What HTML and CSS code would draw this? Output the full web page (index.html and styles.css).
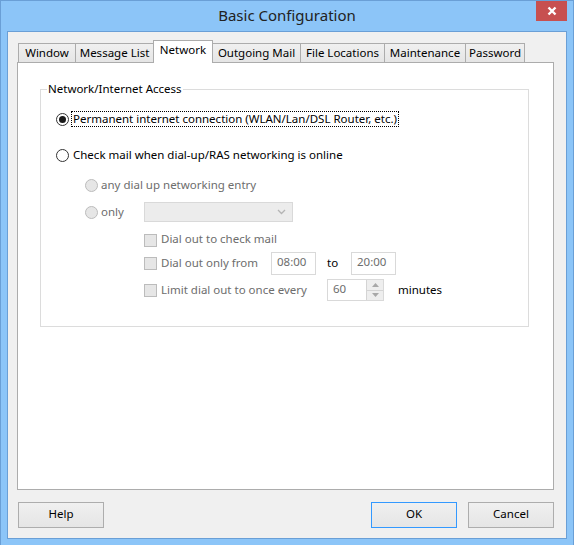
FILE: index.html
```html
<!DOCTYPE html>
<html>
<head>
<meta charset="utf-8">
<title>Basic Configuration</title>
<link rel="stylesheet" href="styles.css">
</head>
<body>
<div class="window">
  <div class="titlebar">
    <span class="title">Basic Configuration</span>
    <div class="close">
      <svg width="10" height="10" viewBox="0 0 10 10"><path d="M1.5 1.5 L8.5 8.5 M8.5 1.5 L1.5 8.5" stroke="#fff" stroke-width="2.4" fill="none"/></svg>
    </div>
  </div>
  <div class="client">
    <div class="tabs">
      <div class="tab t-window">Window</div>
      <div class="tab t-msg">Message List</div>
      <div class="tab t-net selected">Network</div>
      <div class="tab t-out">Outgoing Mail</div>
      <div class="tab t-file">File Locations</div>
      <div class="tab t-maint">Maintenance</div>
      <div class="tab t-pass">Password</div>
    </div>
    <div class="panel">
      <div class="group">
        <span class="legend">Network/Internet Access</span>
        <div class="row r1">
          <span class="radio checked"></span>
          <span class="label focus">Permanent internet connection (WLAN/Lan/DSL Router, etc.)</span>
        </div>
        <div class="row r2">
          <span class="radio"></span>
          <span class="label">Check mail when dial-up/RAS networking is online</span>
        </div>
        <div class="row sub any">
          <span class="radio disabled"></span>
          <span class="dlabel">any dial up networking entry</span>
        </div>
        <div class="row sub only">
          <span class="radio disabled"></span>
          <span class="dlabel only-text">only</span>
          <div class="combo">
            <svg class="chev" width="9" height="6" viewBox="0 0 9 6"><path d="M1 1 L4.5 4.5 L8 1" stroke="#b4b4b4" stroke-width="1.3" fill="none"/></svg>
          </div>
        </div>
        <div class="row cb cb1">
          <span class="check"></span>
          <span class="dlabel">Dial out to check mail</span>
        </div>
        <div class="row cb cb2">
          <span class="check"></span>
          <span class="dlabel w-from">Dial out only from</span>
          <span class="edit">08:00</span>
          <span class="static to">to</span>
          <span class="edit">20:00</span>
        </div>
        <div class="row cb cb3">
          <span class="check"></span>
          <span class="dlabel w-every">Limit dial out to once every</span>
          <div class="spin">
            <span class="spin-text">60</span>
            <div class="spin-btns">
              <span class="spin-btn"><svg width="7" height="4" viewBox="0 0 7 4"><path d="M0 4 L3.5 0 L7 4 Z" fill="#a8a8a8"/></svg></span>
              <span class="spin-btn"><svg width="7" height="4" viewBox="0 0 7 4"><path d="M0 0 L3.5 4 L7 0 Z" fill="#a8a8a8"/></svg></span>
            </div>
          </div>
          <span class="static minutes">minutes</span>
        </div>
      </div>
    </div>
    <div class="buttons">
      <button class="btn">Help</button>
      <span class="spacer"></span>
      <button class="btn default">OK</button>
      <button class="btn">Cancel</button>
    </div>
  </div>
</div>
</body>
</html>
```
FILE: styles.css
```css
html, body {
  margin: 0;
  padding: 0;
  background: #8cc5f8;
}
body {
  font-family: "Noto Sans", "Open Sans", sans-serif;
  font-size: 11.5px;
  color: #000;
}
.window {
  width: 574px;
  height: 545px;
  box-sizing: border-box;
  border: 1px solid #6a9fd6;
  border-bottom: none;
  background: #8cc5f8;
  display: flex;
  flex-direction: column;
}
.titlebar {
  height: 30px;
  position: relative;
  display: flex;
  align-items: center;
  justify-content: center;
  flex: none;
}
.title {
  font-size: 15px;
  color: #222;
  margin-top: -2px;
}
.close {
  position: absolute;
  top: 0;
  right: 6px;
  width: 31px;
  height: 20px;
  background: #c75050;
  display: flex;
  align-items: center;
  justify-content: center;
}
.close svg { display: block; }
.client {
  margin: 0 6px 6px 6px;
  border: 1px solid #6a9fd6;
  background: #f0f0f0;
  height: 508px;
  box-sizing: border-box;
  padding: 8px 12px 0 9px;
  display: flex;
  flex-direction: column;
}
.tabs {
  height: 22px;
  display: flex;
  align-items: flex-end;
  padding-left: 1px;
  position: relative;
  z-index: 2;
}
.tab {
  height: 19px;
  box-sizing: border-box;
  border: 1px solid #acacac;
  border-bottom: none;
  background: linear-gradient(#f0f0f0, #e5e5e5);
  text-align: center;
  line-height: 18px;
  margin-left: -1px;
  white-space: nowrap;
}
.tab:first-child { margin-left: 0; }
.t-window { width: 58px; }
.t-msg { width: 79px; }
.t-net { width: 60px; }
.t-out { width: 89px; }
.t-file { width: 85px; }
.t-maint { width: 82px; }
.t-pass { width: 60px; }
.tab.selected {
  height: 23px;
  background: #fff;
  margin-bottom: -1px;
  line-height: 18px;
  position: relative;
  z-index: 3;
}
.panel {
  height: 428px;
  box-sizing: border-box;
  border: 1px solid #acacac;
  background: #fff;
  flex: none;
  padding-top: 26px;
  padding-left: 22px;
}
.group {
  position: relative;
  width: 489px;
  height: 238px;
  box-sizing: border-box;
  border: 1px solid #dcdcdc;
  padding-top: 21px;
}
.legend {
  position: absolute;
  top: -10px;
  left: 6px;
  padding: 0 1px;
  background: #fff;
  line-height: 18px;
}
.row {
  display: flex;
  align-items: center;
  height: 16px;
  padding-left: 15px;
}
.r2 { margin-top: 20px; }
.sub { padding-left: 44px; }
.any { margin-top: 14px; }
.only { margin-top: 9px; height: 20px; }
.cb { padding-left: 103px; }
.cb1 { margin-top: 10px; }
.cb2 { margin-top: 4px; height: 23px; }
.cb3 { margin-top: 4px; height: 22px; }

.radio {
  width: 13px;
  height: 13px;
  box-sizing: border-box;
  border: 1px solid #333;
  border-radius: 50%;
  background: #fff;
  flex: none;
  display: flex;
  align-items: center;
  justify-content: center;
}
.radio.checked::after {
  content: "";
  width: 7px;
  height: 7px;
  border-radius: 50%;
  background: #1a1a1a;
}
.radio.disabled {
  border-color: #bcbcbc;
  background: #e6e6e6;
}
.label {
  margin-left: 2px;
  padding: 0 1px;
  border: 1px solid transparent;
  line-height: 14px;
}
.label.focus {
  border: 1px dotted #000;
}
.dlabel {
  color: #6d6d6d;
  margin-left: 3px;
  margin-bottom: 2px;
  white-space: nowrap;
}
.only-text { width: 43px; }
.combo {
  width: 149px;
  height: 20px;
  box-sizing: border-box;
  border: 1px solid #d9d9d9;
  background: #ececec;
  display: flex;
  align-items: center;
  justify-content: flex-end;
  padding-right: 6px;
}
.chev { display: block; }
.check {
  width: 13px;
  height: 13px;
  box-sizing: border-box;
  border: 1px solid #bcbcbc;
  background: #e6e6e6;
  flex: none;
}
.w-from { width: 110px; margin-left: 4px; }
.w-every { width: 166px; margin-left: 4px; }
.cb1 .dlabel { margin-left: 4px; margin-bottom: 3px; }
.edit {
  width: 45px;
  height: 23px;
  box-sizing: border-box;
  border: 1px solid #d9d9d9;
  background: #fff;
  color: #6d6d6d;
  padding-left: 5px;
  line-height: 18px;
}
.static { color: #000; margin-bottom: 2px; }
.to { margin-left: 11px; margin-right: 11px; width: 13px; }
.spin {
  width: 57px;
  height: 22px;
  box-sizing: border-box;
  border: 1px solid #d9d9d9;
  background: #fff;
  display: flex;
}
.spin-text {
  flex: 1;
  color: #6d6d6d;
  padding-left: 5px;
  line-height: 17px;
}
.spin-btns {
  width: 17px;
  display: flex;
  flex-direction: column;
}
.spin-btn {
  flex: 1;
  border-left: 1px solid #d4d4d4;
  background: #eeeeee;
  display: flex;
  align-items: center;
  justify-content: center;
}
.spin-btn + .spin-btn { border-top: 1px solid #d4d4d4; }
.spin-btn svg { display: block; }
.minutes { margin-left: 14px; }

.buttons {
  display: flex;
  margin-top: 12px;
  padding-left: 1px;
}
.spacer { flex: 1; }
.btn {
  width: 86px;
  height: 26px;
  box-sizing: border-box;
  border: 1px solid #adadad;
  background: linear-gradient(#f0f0f0, #e5e5e5);
  font-family: "Noto Sans", "Open Sans", sans-serif;
  font-size: 11.5px;
  color: #000;
  padding: 0 0 3px 0;
  margin: 0;
}
.btn.default {
  border-color: #3399ff;
  margin-right: 11px;
}
```
